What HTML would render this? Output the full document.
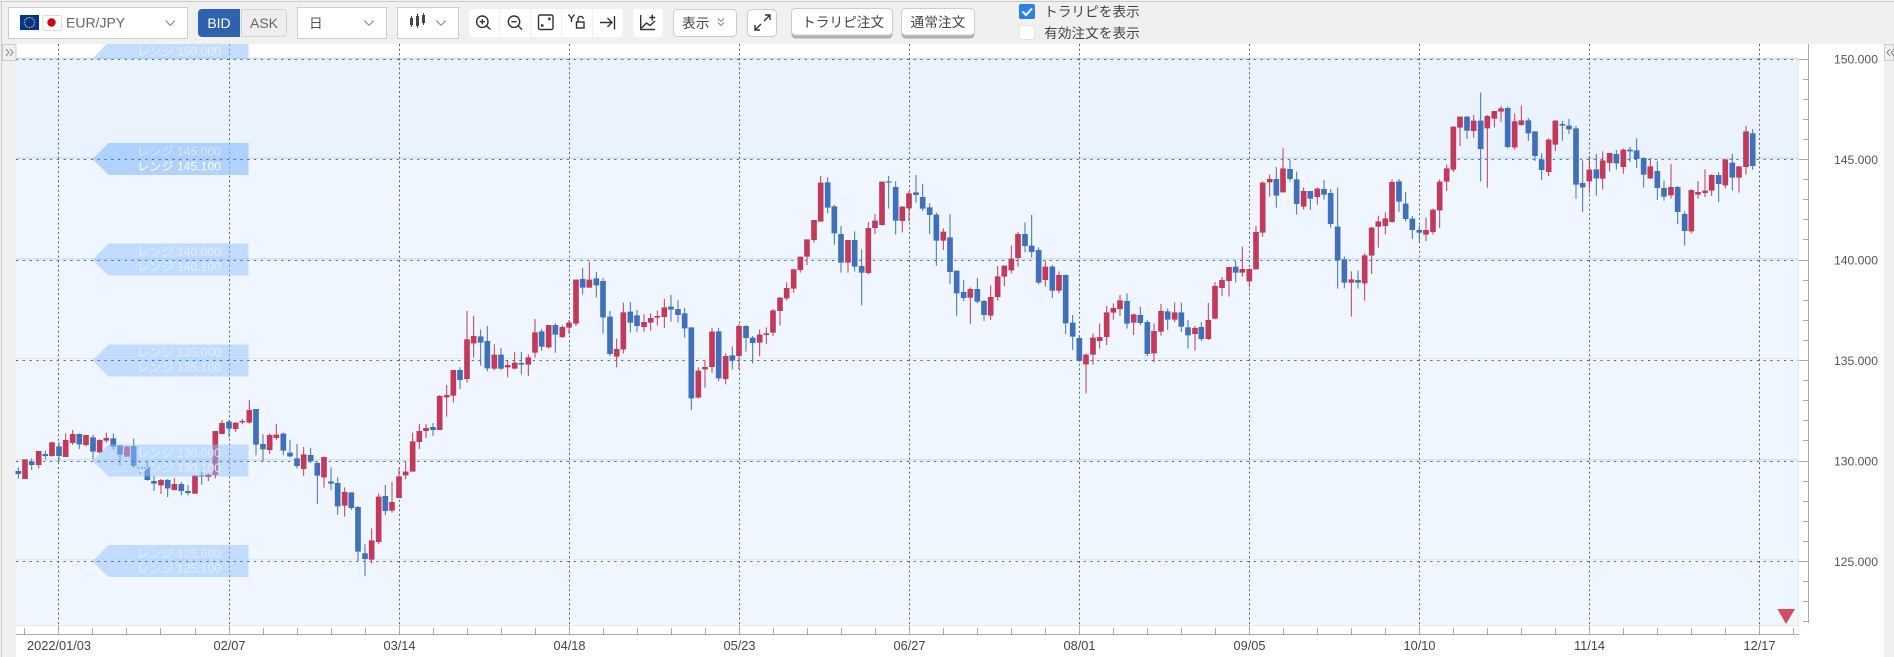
<!DOCTYPE html>
<html lang="ja"><head><meta charset="utf-8"><title>EUR/JPY</title>
<style>
html,body{margin:0;padding:0;background:#fff;width:1894px;height:657px;overflow:hidden}
svg{display:block;font-family:"Liberation Sans","Noto Sans CJK JP",sans-serif;filter:blur(.35px)}
.rw{fill:none;stroke:#c23a5a;stroke-width:3}.rb{fill:none;stroke:#c23a5a;stroke-width:17}
.bw{fill:none;stroke:#4070b9;stroke-width:3}.bb{fill:none;stroke:#4070b9;stroke-width:17}
.ic{fill:none;stroke:#333;stroke-width:1.4}
.chev{fill:none;stroke:#888;stroke-width:1.1}
.tb{font-size:13.7px;fill:#444}
.ax{font-size:12.8px;fill:#444;text-anchor:middle}
.pr{font-size:12.2px;fill:#555;text-anchor:end}
.lt{font-size:12.2px;fill:#e6f0ff}
</style></head><body>
<svg width="1894" height="657" viewBox="0 0 1894 657" xmlns="http://www.w3.org/2000/svg">
<!-- page frame -->
<rect width="1894" height="657" fill="#fff"/>
<rect width="1894" height="44" fill="#f0f0f0"/>
<rect y="1" width="1894" height="1" fill="#ccc"/>
<rect x="0" y="44" width="16" height="613" fill="#f0f0f0"/>
<rect x="1" y="2" width="1" height="655" fill="#ccc"/>
<rect x="1884" y="44" width="10" height="613" fill="#f0f0f0"/>

<!-- plot -->
<rect x="16" y="59" width="1782" height="100" fill="#eaf2fe"/>
<rect x="16" y="159" width="1782" height="466" fill="#eff6ff"/>
<rect x="16" y="625" width="1783" height="1" fill="#e8e8e8"/>
<rect x="1798" y="59" width="1" height="567" fill="#e8e8e8"/>

<!-- range bands -->
<g fill="#cbe0ff"><rect x="16" y="57.6" width="1782" height="1.4"/><rect x="16" y="157.4" width="1782" height="1.5"/><rect x="16" y="258.2" width="1782" height="1.5"/><rect x="16" y="358" width="1782" height="1" opacity=".6"/><rect x="16" y="459.2" width="1782" height="1.4"/><rect x="16" y="559.2" width="1782" height="1" opacity=".6"/></g>

<!-- vertical grid -->
<path fill="none" stroke="#5a6375" stroke-width="1" stroke-dasharray="2 2.7" d="M58.5 44V625M229.5 44V625M399.5 44V625M569.5 44V625M739.5 44V625M909.5 44V625M1079.5 44V625M1249.5 44V625M1419.5 44V625M1589.5 44V625M1759.5 44V625"/>

<!-- candles A -->
<g transform="translate(0 400) scale(.33333)">
<path class="bw" d="M55 202V236M95 175V210M136 152V178M177 126V185M238 100V147M279 105V178M340 100V148M360 136V197M401 116V204M421 186V222M442 185V242M462 228V273M503 237V291M544 246V286M564 255V286M605 212V254M687 60V112M768 27V166M789 103V184M850 98V165M870 120V173M891 132V205M932 144V189M952 185V312M993 202V270M1013 232V345M1054 277V330M1074 318V484M1095 432V528M1156 255V346"/>
<path class="bb" d="M55 213V222M95 184V195M136 162V168M177 139V168M238 102V133M279 112V155M340 115V140M360 136V164M401 138V198M421 202V205M442 202V240M462 243V251M503 240V265M544 252V273M564 273V279M605 226V230M687 65V86M768 27V134M789 132V148M850 101V152M870 158V169M891 175V198M932 165V184M952 189V227M993 244V251M1013 249V319M1054 277V324M1074 321V455M1095 460V477M1156 288V333"/>
<path class="rw" d="M75 178V237M116 153V206M156 125V170M197 100V171M218 90V135M258 105V140M299 118V160M319 98V128M381 138V170M483 237V282M523 234V272M585 225V282M625 220V243M646 93V235M666 60V103M707 67V96M727 57V73M748 0V71M809 100V162M829 72V120M911 141V228M972 170V263M1034 262V350M1115 385V490M1136 281V432M1176 246V338M1197 205V294M1217 185V238M1238 98V215"/>
<path class="rb" d="M75 178V237M116 153V195M156 127V168M197 120V171M218 102V129M258 105V135M299 120V157M319 114V122M381 140V170M483 240V256M523 252V270M585 227V281M625 223V231M646 93V225M666 69V102M707 68V87M727 63V67M748 30V68M809 105V150M829 104V114M911 163V207M972 171V232M1034 276V317M1115 421V479M1136 290V426M1176 306V332M1197 229V294M1217 215V226M1238 124V215"/>
</g>
<!-- candles B -->
<g transform="translate(400 250) scale(.33333)">
<path class="rw" d="M58 522V597M78 522V564M119 435V540M140 405V500M160 360V457M201 183V398M221 198V322M283 283V360M323 330V382M344 306V358M385 313V378M405 207V323M446 225V296M487 226V264M507 210V252M528 88V228M568 35V114M650 266V352M670 158V310M732 193V245M752 190V242M772 182V227M793 147V234M895 352V445M915 333V413M936 234V369M977 310V403M1017 222V359M1079 238V319M1099 232V282M1119 177V258M1140 141V227M1160 97V151M1181 56V128"/>
<path class="rb" d="M58 543V576M78 534V543M119 438V540M140 435V442M160 360V437M201 268V387M221 258V280M283 314V356M323 345V352M344 338V356M385 322V344M405 247V308M446 225V292M487 231V261M507 218V233M528 89V221M568 89V113M650 297V320M670 187V298M732 216V231M752 204V218M772 198V203M793 172V201M895 362V443M915 351V358M936 245V351M977 318V387M1017 228V318M1079 254V278M1099 250V255M1119 181V248M1140 143V183M1160 114V145M1181 58V116"/>
<path class="bw" d="M99 519V558M180 352V417M242 238V347M262 228V364M303 294V360M364 306V374M425 237V302M466 220V308M548 54V134M589 66V143M609 84V250M630 183V318M691 156V248M711 180V245M813 135V215M834 151V217M854 174V263M874 232V480M956 234V393M997 289V358M1038 226V305M1058 258V340"/>
<path class="bb" d="M99 531V540M180 360V390M242 259V278M262 273V355M303 314V356M364 339V344M425 244V290M466 225V254M548 87V113M589 85V106M609 93V202M630 200V312M691 185V218M711 196V228M813 170V179M834 177V195M854 190V235M874 232V445M956 244V385M997 316V332M1038 228V264M1058 263V279"/>
</g>
<!-- candles C -->
<g transform="translate(800 160) scale(.33333)">
<path class="rw" d="M1 290V338M21 238V315M42 180V248M62 48V185M144 240V338M205 186V343M225 162V222M246 65V197M307 138V217M327 95V185M430 205V270M511 382V491M572 376V480M593 318V422M613 317V378M634 256V340M654 216V320M736 302V380M777 334V400M858 580V700M879 520V614M899 490V566M920 438V555M940 430V479M960 405V468M1001 461V525M1062 490V607M1083 432V527M1124 427V486M1185 498V572"/>
<path class="rb" d="M1 290V330M21 238V290M42 180V240M62 68V185M144 240V308M205 204V339M225 182V204M246 65V195M307 140V183M327 100V145M430 215V242M511 387V413M572 411V467M593 349V411M613 317V350M634 296V331M654 222V294M736 320V360M777 345V392M858 584V613M879 533V584M899 531V543M920 457V531M940 444V458M960 421V447M1001 463V488M1062 513V580M1083 453V515M1124 457V479M1185 504V522"/>
<path class="bw" d="M83 52V160M103 135V254M123 198V338M164 214V335M185 268V436M266 48V146M287 64V223M348 45V128M368 72V153M389 130V222M409 158V317M450 162V372M470 332V467M491 360V423M532 354V430M552 420V483M675 188V277M695 165V293M716 262V373M757 315V414M797 343V522M818 465V570M838 525V605M981 400V506M1021 441V495M1042 480V588M1103 445V510M1144 428V516M1164 480V566M1204 486V543"/>
<path class="bb" d="M83 67V143M103 139V220M123 222V308M164 240V320M185 318V338M266 64V68M287 81V182M348 97V105M368 111V146M389 142V165M409 164V242M450 232V336M470 332V400M491 396V414M532 387V425M552 423V465M675 222V258M695 257V276M716 270V368M757 320V392M797 345V490M818 488V530M838 534V603M981 423V491M1021 465V489M1042 486V582M1103 454V479M1144 457V500M1164 502V526M1204 501V537"/>
</g>
<!-- candles D -->
<g transform="translate(1200 80) scale(.33333)">
<path class="rw" d="M25 669V780M45 606V718M66 591V648M87 561V650M127 500V590M148 565V622M168 438V568M188 304V470M209 283V350M249 205V338M311 322V389M352 322V374M454 574V710M494 520V662M515 441V582M535 407V503M556 397V463M576 298V428M678 412V483M699 386V464M719 298V444M740 254V333M760 140V276M780 110V198M821 105V173M862 105V323M883 93V142M903 78V126M944 100V209M964 76V137M1046 175V288M1066 120V213M1168 228V340"/>
<path class="rb" d="M25 720V777M45 618V716M66 600V624M87 561V603M127 567V578M148 567V604M168 456V568M188 308V458M209 297V307M249 265V337M311 333V380M352 326V351M454 598V608M494 526V610M515 443V527M535 424V440M556 415V438M576 306V426M678 450V464M699 389V456M719 305V391M740 265V305M760 140V269M780 110V143M821 122V153M862 108V145M883 93V116M903 85V95M944 124V202M964 121V135M1046 179V276M1066 122V194M1168 269V304"/>
<path class="bw" d="M107 543V607M229 261V383M270 240V305M290 275V404M331 333V390M372 300V359M392 327V443M413 322V626M433 530V625M474 572V626M597 297V396M617 336V424M637 408V477M658 436V488M801 108V177M842 38V305M923 80V205M985 114V183M1005 154V243M1025 220V300M1087 123V182M1107 117V162M1128 138V356M1148 241V396M1189 222V347"/>
<path class="bb" d="M107 560V578M229 297V347M270 267V297M290 298V372M331 333V356M372 327V344M392 339V432M413 440V541M433 538V608M474 600V608M597 304V365M617 371V417M637 416V450M658 450V458M801 110V152M842 122V207M923 84V201M985 121V160M1005 154V228M1025 238V270M1087 132V137M1107 137V148M1128 145V314M1148 309V322M1189 268V295"/>
</g>
<!-- candles E -->
<g transform="translate(1500 40) scale(.33333)">
<path class="rw" d="M308 334V449M329 339V394M370 325V401M451 354V417M513 372V476M574 448V580M594 423V475M615 388V471M635 403V468M676 358V446M717 379V458M738 258V404"/>
<path class="rb" d="M308 361V416M329 339V369M370 329V381M451 379V415M513 441V466M574 450V574M594 456V464M615 452V459M635 405V452M676 358V436M717 379V413M738 274V381"/>
<path class="bw" d="M349 330V389M390 321V366M410 295V384M431 352V443M472 363V480M492 422V482M533 438V552M554 514V616M656 396V486M697 342V452M758 267V389"/>
<path class="bb" d="M349 342V370M390 329V334M410 331V357M431 354V404M472 393V444M492 444V470M533 441V516M554 522V573M656 405V432M697 368V413M758 280V378"/>
</g>

<!-- range labels -->
<g fill="#93c1ff">
<polygon fill-opacity=".55" points="92.5,59 106.5,44 248.5,44 248.5,59"/>
<polygon fill-opacity=".68" points="92.5,159 108.5,143 248.5,143 248.5,175 108.5,175"/>
<polygon fill-opacity=".5" points="92.5,260 108.5,243.5 248.5,243.5 248.5,275.5 108.5,275.5"/>
<polygon fill-opacity=".5" points="92.5,360.5 108.5,344.5 248.5,344.5 248.5,376.5 108.5,376.5"/>
<polygon fill-opacity=".5" points="92.5,461 108.5,444.5 248.5,444.5 248.5,476.5 108.5,476.5"/>
<polygon fill-opacity=".5" points="92.5,561.5 108.5,545 248.5,545 248.5,577 108.5,577"/>
</g>
<g class="lt">
<text x="137" y="55.5" opacity=".95">レンジ 150.000</text>
<text x="137" y="155.5" opacity=".7">レンジ 145.000</text><text x="137" y="170.5" style="fill:#fff">レンジ 145.100</text>
<text x="137" y="256" opacity=".85">レンジ 140.000</text><text x="137" y="271" opacity=".95">レンジ 140.100</text>
<text x="137" y="356.5" opacity=".85">レンジ 135.000</text><text x="137" y="371.5" opacity=".95">レンジ 135.100</text>
<text x="137" y="457" opacity=".85">レンジ 130.000</text><text x="137" y="472" opacity=".95">レンジ 130.100</text>
<text x="137" y="557.5" opacity=".85">レンジ 125.000</text><text x="137" y="572.5" opacity=".95">レンジ 125.100</text>
</g>

<!-- horizontal dashed lines -->
<path fill="none" stroke="#5a6a80" stroke-width="1" stroke-dasharray="2.2 4.6" d="M16 59.5H1798M16 159.5H1798M16 260.5H1798M16 360.5H1798M16 461.5H1798M16 561.5H1798"/>

<!-- time axis -->
<rect x="16" y="634" width="1783" height="1" fill="#aaa"/>
<path fill="none" stroke="#aaa" stroke-width="1" d="M58.5 625V634M229.5 625V634M399.5 625V634M569.5 625V634M739.5 625V634M909.5 625V634M1079.5 625V634M1249.5 625V634M1419.5 625V634M1589.5 625V634M1759.5 625V634"/>
<path fill="none" stroke="#aaa" stroke-width="1" d="M24.5 628V634M92.5 628V634M126.5 628V634M160.5 628V634M195.5 628V634M263.5 628V634M297.5 628V634M331.5 628V634M365.5 628V634M433.5 628V634M467.5 628V634M501.5 628V634M535.5 628V634M603.5 628V634M637.5 628V634M671.5 628V634M705.5 628V634M773.5 628V634M807.5 628V634M841.5 628V634M875.5 628V634M943.5 628V634M977.5 628V634M1011.5 628V634M1045.5 628V634M1113.5 628V634M1147.5 628V634M1181.5 628V634M1215.5 628V634M1283.5 628V634M1317.5 628V634M1351.5 628V634M1385.5 628V634M1453.5 628V634M1487.5 628V634M1521.5 628V634M1555.5 628V634M1623.5 628V634M1657.5 628V634M1691.5 628V634M1725.5 628V634M1793.5 628V634"/>
<g class="ax">
<text x="59" y="650">2022/01/03</text><text x="229.5" y="650">02/07</text><text x="399.5" y="650">03/14</text><text x="569.5" y="650">04/18</text><text x="739.5" y="650">05/23</text><text x="909.5" y="650">06/27</text><text x="1079.5" y="650">08/01</text><text x="1249.5" y="650">09/05</text><text x="1419.5" y="650">10/10</text><text x="1589.5" y="650">11/14</text><text x="1759.5" y="650">12/17</text>
</g>

<!-- price axis -->
<rect x="1808" y="44" width="1" height="579" fill="#aaa"/>
<path fill="none" stroke="#aaa" stroke-width="1" d="M1799 59.5H1808M1799 159.5H1808M1799 260.5H1808M1799 360.5H1808M1799 461.5H1808M1799 561.5H1808"/>
<path fill="none" stroke="#aaa" stroke-width="1" d="M1803 79.5H1808M1803 99.5H1808M1803 119.5H1808M1803 139.5H1808M1803 179.5H1808M1803 199.5H1808M1803 219.5H1808M1803 239.5H1808M1803 280.5H1808M1803 300.5H1808M1803 320.5H1808M1803 340.5H1808M1803 380.5H1808M1803 400.5H1808M1803 420.5H1808M1803 440.5H1808M1803 481.5H1808M1803 501.5H1808M1803 521.5H1808M1803 541.5H1808M1803 581.5H1808M1803 601.5H1808M1803 621.5H1808"/>
<g class="pr">
<text x="1878" y="63.5">150.000</text><text x="1878" y="164">145.000</text><text x="1878" y="264.5">140.000</text><text x="1878" y="365">135.000</text><text x="1878" y="465.5">130.000</text><text x="1878" y="566">125.000</text>
</g>

<!-- triangle -->
<polygon points="1777.5,609 1795,609 1786,624" fill="#d24c62"/>

<!-- side collapse -->
<rect x="2.5" y="44.5" width="13.5" height="16" fill="#f0f0f0" stroke="#ccc"/>
<path fill="none" stroke="#889" stroke-width="1" d="M6 49L9 52.5L6 56M10 49L13 52.5L10 56"/>
<rect x="1884.5" y="44.5" width="9" height="16" fill="#f0f0f0" stroke="#ccc"/>
<path fill="none" stroke="#889" stroke-width="1" d="M1890 49L1887 52.5L1890 56M1894 49L1891 52.5L1894 56"/>

<!-- toolbar: pair select -->
<rect x="8.5" y="7.5" width="179" height="31" fill="#fff" stroke="#ccc"/>
<rect x="20" y="15" width="19" height="15" fill="#039"/>
<g fill="#fc0"><circle cx="29.5" cy="17.5" r=".8"/><circle cx="32" cy="18.2" r=".8"/><circle cx="33.8" cy="20" r=".8"/><circle cx="34.5" cy="22.5" r=".8"/><circle cx="33.8" cy="25" r=".8"/><circle cx="32" cy="26.8" r=".8"/><circle cx="29.5" cy="27.5" r=".8"/><circle cx="27" cy="26.8" r=".8"/><circle cx="25.2" cy="25" r=".8"/><circle cx="24.5" cy="22.5" r=".8"/><circle cx="25.2" cy="20" r=".8"/><circle cx="27" cy="18.2" r=".8"/></g>
<rect x="43" y="15.5" width="18.5" height="15" rx="1.5" fill="#fff" stroke="#ddd"/>
<circle cx="51.5" cy="22.5" r="4.2" fill="#d4001c"/>
<text x="66" y="27.5" font-size="14" fill="#666">EUR/JPY</text>
<path class="chev" d="M165.5 20.5L170.3 25.3L175 20.5"/>

<!-- BID ASK -->
<path d="M202 9H240V37H202a4 4 0 0 1-4-4V13a4 4 0 0 1 4-4z" fill="#2f62ae"/>
<text x="219" y="28" font-size="14" fill="#fff" text-anchor="middle">BID</text>
<path d="M241.5 9.5H282.5a4 4 0 0 1 4 4V32.5a4 4 0 0 1-4 4H241.5z" fill="#eee" stroke="#d4d4d4"/>
<text x="264" y="28" font-size="14" fill="#666" text-anchor="middle">ASK</text>

<!-- period select -->
<rect x="297.5" y="7.5" width="89" height="31" fill="#fff" stroke="#ccc"/>
<text x="309" y="28" font-size="13.7" fill="#555">日</text>
<path class="chev" d="M364 20.5L369 25.3L374 20.5"/>

<!-- chart type select -->
<rect x="397.5" y="7.5" width="61" height="31" fill="#fff" stroke="#ccc"/>
<path fill="none" stroke="#444" stroke-width="1" d="M411.5 16V27M417.5 13.5V28M423.5 13V25"/>
<g fill="#444"><rect x="410" y="18" width="3" height="7"/><rect x="416" y="16" width="3" height="10"/><rect x="422" y="15" width="3" height="8"/></g>
<path class="chev" d="M436 20.5L441 25.3L446 20.5"/>

<!-- icon group -->
<rect x="469" y="9" width="154" height="28" rx="4" fill="#fff"/>
<path stroke="#f0f0f0" stroke-width="1" d="M499.5 9V37M530.5 9V37M561.5 9V37M592.5 9V37"/>
<rect x="633" y="9" width="30" height="28" rx="4" fill="#fff"/>
<g class="ic">
<circle cx="482.3" cy="21.7" r="5.7"/><path d="M486.3 25.7L490.5 29.5M479.7 21.7H484.9M482.3 19.1V24.3"/>
<circle cx="514" cy="21.7" r="5.7"/><path d="M518 25.7L522 29.5M511.4 21.7H516.6"/>
<rect x="538.5" y="15" width="14.5" height="14.5" rx="1.5"/>
<path d="M548 18.2H550V20.2M543.6 26.2H541.6V24.2M550 18.2L548.3 20M541.6 26.2L543.3 24.5" stroke-width="1.2"/>
<path d="M568.5 14.5L571.5 18.5L574.5 14.5M571.5 18.5V22"/>
<rect x="576.5" y="22" width="7.5" height="6"/><path d="M578 22V19a2.6 2.6 0 0 1 5.2 0"/>
<path d="M600 22.5H612M607.5 18L612 22.5L607.5 27M614.5 16V29.5"/>
<path d="M640.7 15V29.5H655M641.5 28L646.5 23L650 25.5L655 21M652.3 14.5V20.5M649.3 17.5H655.3"/>
</g>

<!-- 表示 -->
<rect x="673.5" y="9.5" width="63" height="27" rx="4" fill="#fff" stroke="#ccc"/>
<text x="682" y="28" class="tb">表示</text>
<path class="chev" d="M718 18.5L721 21.5L724 18.5M718 22.5L721 25.5L724 22.5"/>

<!-- expand -->
<rect x="747.5" y="9.5" width="29" height="27" rx="4" fill="#fff" stroke="#ccc"/>
<g fill="none" stroke="#333" stroke-width="1.4"><path d="M755 30L761 24M755 25V30H760"/><path d="M770 15L764 21M765 15H770V20"/></g>

<!-- order buttons -->
<rect x="791.5" y="8.5" width="101" height="30" rx="4" fill="#b0b0b0"/>
<rect x="791.5" y="8.5" width="101" height="26.5" rx="4" fill="#fff" stroke="#ccc"/>
<text x="802" y="27" class="tb">トラリピ注文</text>
<rect x="901.5" y="8.5" width="73" height="30" rx="4" fill="#b0b0b0"/>
<rect x="901.5" y="8.5" width="73" height="26.5" rx="4" fill="#fff" stroke="#ccc"/>
<text x="910.5" y="27" class="tb">通常注文</text>

<!-- checkboxes -->
<rect x="1019" y="4" width="16" height="15" rx="2" fill="#2c80e6"/>
<path fill="none" stroke="#fff" stroke-width="2" d="M1022.5 11.5L1026 15L1032 8.5"/>
<text x="1044" y="16.5" class="tb">トラリピを表示</text>
<rect x="1019.5" y="25.5" width="15" height="14" rx="2" fill="#fff" stroke="#e2e2e2"/>
<text x="1044" y="38" class="tb">有効注文を表示</text>
</svg>
</body></html>
